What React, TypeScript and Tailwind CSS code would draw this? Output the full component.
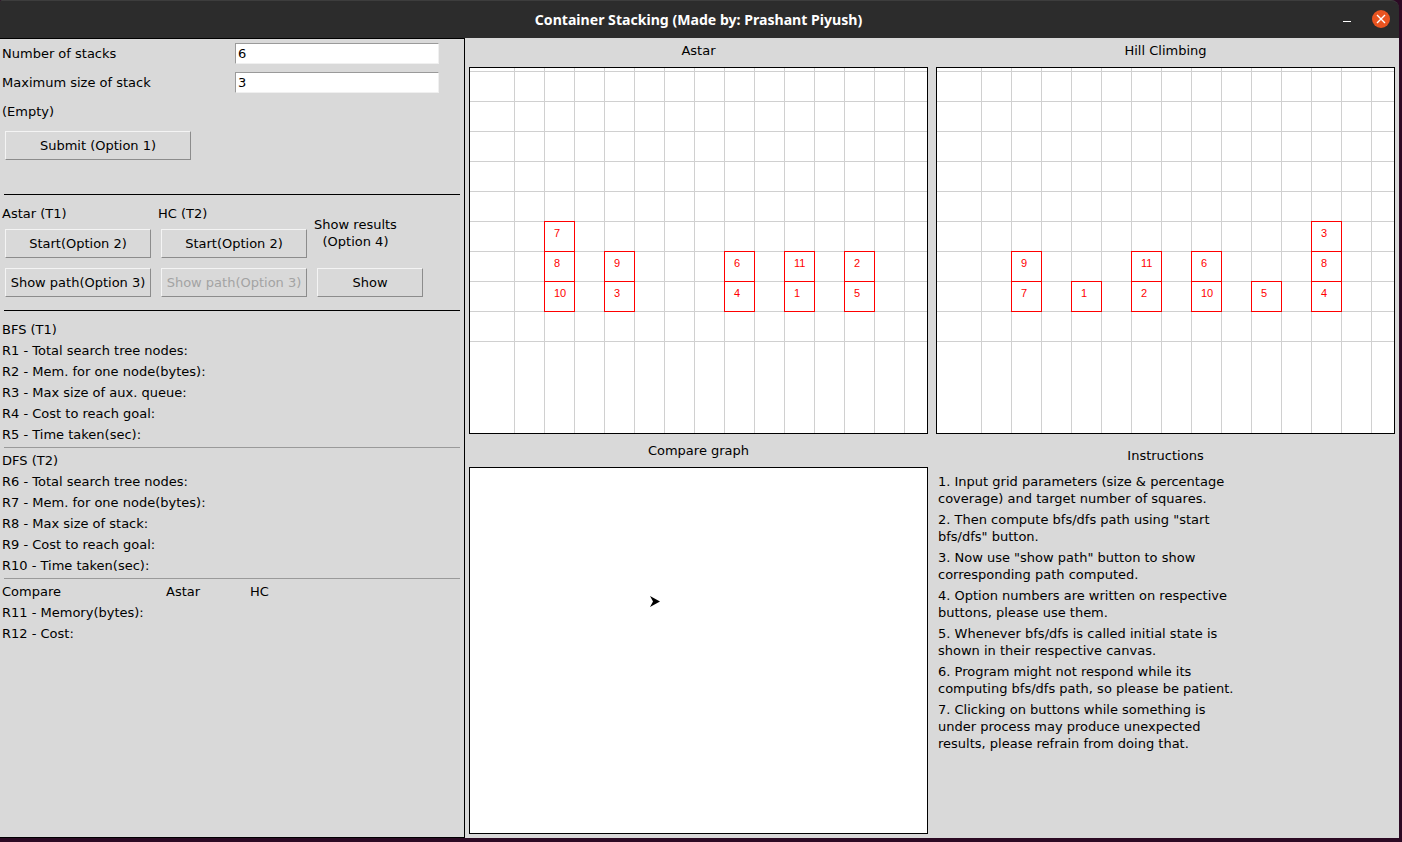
import React from 'react';

const font = { fontFamily: '"DejaVu Sans", sans-serif' };

type Stack = { x: number; items: string[] };

const astarStacks: Stack[] = [
  { x: 74, items: ['7', '8', '10'] },
  { x: 134, items: ['9', '3'] },
  { x: 254, items: ['6', '4'] },
  { x: 314, items: ['11', '1'] },
  { x: 374, items: ['2', '5'] },
];

const hcStacks: Stack[] = [
  { x: 74, items: ['9', '7'] },
  { x: 134, items: ['1'] },
  { x: 194, items: ['11', '2'] },
  { x: 254, items: ['6', '10'] },
  { x: 314, items: ['5'] },
  { x: 374, items: ['3', '8', '4'] },
];

const vLines = Array.from({ length: 15 }, (_, i) => 44 + i * 30).filter((x) => x < 457);
const hLines = Array.from({ length: 10 }, (_, i) => 3 + i * 30);

const GridCanvas: React.FC<{ stacks: Stack[] }> = ({ stacks }) => (
  <div className="h-[367px] w-[459px] border border-black bg-white">
    <svg width="457" height="365" className="block">
      {vLines.map((x) => (
        <line key={x} x1={x + 0.5} x2={x + 0.5} y1="0" y2="365" stroke="#d0d0d0" />
      ))}
      {hLines.map((y) => (
        <line key={y} x1="0" x2="457" y1={y + 0.5} y2={y + 0.5} stroke="#d0d0d0" />
      ))}
      {stacks.map((s) =>
        s.items.map((label, i) => {
          const top = 243 - (s.items.length - i) * 30;
          return (
            <g key={label}>
              <rect x={s.x + 0.5} y={top + 0.5} width="30" height="30" fill="none" stroke="#ff0000" />
              <text x={s.x + 10} y={top + 16} fill="#ff0000" fontSize="11" fontFamily='"Liberation Sans", sans-serif'>
                {label}
              </text>
            </g>
          );
        }),
      )}
    </svg>
  </div>
);

const TkButton: React.FC<{ label: string; className: string; disabled?: boolean }> = ({ label, className, disabled }) => (
  <button
    className={`flex h-[29px] items-center justify-center whitespace-nowrap border border-t-[#f4f4f4] border-l-[#f4f4f4] border-r-[#8c8c8c] border-b-[#8c8c8c] ${
      disabled ? 'text-[#a3a3a3]' : 'text-black'
    } ${className}`}
  >
    {label}
  </button>
);

const FieldRow: React.FC<{ label: string; value: string }> = ({ label, value }) => (
  <div className="flex h-[29px] items-center pl-[2px]">
    <span className="w-[233px]">{label}</span>
    <div className="flex h-[21px] w-[204px] items-center border border-t-[#9a9a9a] border-l-[#9a9a9a] border-r-[#f0f0f0] border-b-[#f0f0f0] bg-white pl-[2px]">
      {value}
    </div>
  </div>
);

const ResultLines: React.FC<{ lines: string[] }> = ({ lines }) => (
  <div className="pl-[2px]">
    {lines.map((line) => (
      <div key={line} className="h-[21px] leading-[21px]">
        {line}
      </div>
    ))}
  </div>
);

const instructions = [
  ['1. Input grid parameters (size & percentage', 'coverage) and target number of squares.'],
  ['2. Then compute bfs/dfs path using "start', 'bfs/dfs" button.'],
  ['3. Now use "show path" button to show', 'corresponding path computed.'],
  ['4. Option numbers are written on respective', 'buttons, please use them.'],
  ['5. Whenever bfs/dfs is called initial state is', 'shown in their respective canvas.'],
  ['6. Program might not respond while its', 'computing bfs/dfs path, so please be patient.'],
  ['7. Clicking on buttons while something is', 'under process may produce unexpected', 'results, please refrain from doing that.'],
];

export default function App() {
  return (
    <div className="h-[842px] w-[1402px] overflow-hidden bg-[#2c0a24] text-[13px] text-black" style={font}>
      <div className="flex h-[838px] w-[1399px] flex-col">
        <div className="relative flex h-[38px] shrink-0 items-center justify-center rounded-tl-[2px] rounded-tr-[8px] border-t border-[#3d3d3d] bg-[#2c2c2c] pr-[2px]">
          <span className="text-[14.1px] font-bold text-white" style={{ fontFamily: '"Noto Sans", sans-serif' }}>
            Container Stacking (Made by: Prashant Piyush)
          </span>
          <div className="absolute top-[20px] left-[1343px] h-px w-[8px] bg-white" />
          <div className="absolute top-[9px] left-[1372px] flex h-[18px] w-[18px] items-center justify-center rounded-full bg-[#e95420]">
            <svg width="10" height="10" viewBox="0 0 10 10">
              <path d="M1 1l8 8M9 1l-8 8" stroke="white" strokeWidth="1.4" />
            </svg>
          </div>
        </div>

        <div className="flex min-h-0 flex-1 bg-[#d9d9d9]">
          <div className="w-[465px] shrink-0 border-t border-r border-b border-black">
            <FieldRow label="Number of stacks" value="6" />
            <FieldRow label="Maximum size of stack" value="3" />
            <div className="flex h-[29px] items-center pl-[2px]">(Empty)</div>
            <TkButton label="Submit (Option 1)" className="mt-[5px] ml-[5px] w-[186px]" />
            <div className="mt-[34px] ml-[4px] h-px w-[456px] bg-black" />

            <div className="flex">
              <div className="w-[156px] pl-[2px]">
                <div className="flex h-[34px] items-center pt-[3px]">Astar (T1)</div>
                <TkButton label="Start(Option 2)" className="ml-[3px] w-[146px]" />
                <TkButton label="Show path(Option 3)" className="mt-[10px] ml-[3px] w-[146px]" />
              </div>
              <div className="w-[156px] pl-[2px]">
                <div className="flex h-[34px] items-center pt-[3px]">HC (T2)</div>
                <TkButton label="Start(Option 2)" className="ml-[3px] w-[146px]" />
                <TkButton label="Show path(Option 3)" className="mt-[10px] ml-[3px] w-[146px]" disabled />
              </div>
              <div className="w-[120px] pl-[2px]">
                <div className="mt-[21px] w-[83px] whitespace-nowrap text-center leading-[17px]">
                  Show results
                  <br />
                  (Option 4)
                </div>
                <TkButton label="Show" className="mt-[18px] ml-[3px] w-[106px]" />
              </div>
            </div>

            <div className="mt-[13px] ml-[4px] h-px w-[456px] bg-black" />

            <div className="pt-[8px]">
              <ResultLines
                lines={[
                  'BFS (T1)',
                  'R1 - Total search tree nodes:',
                  'R2 - Mem. for one node(bytes):',
                  'R3 - Max size of aux. queue:',
                  'R4 - Cost to reach goal:',
                  'R5 - Time taken(sec):',
                ]}
              />
              <div className="mt-[2px] mb-[2px] ml-[4px] h-px w-[456px] bg-[#9a9a9a]" />
              <ResultLines
                lines={[
                  'DFS (T2)',
                  'R6 - Total search tree nodes:',
                  'R7 - Mem. for one node(bytes):',
                  'R8 - Max size of stack:',
                  'R9 - Cost to reach goal:',
                  'R10 - Time taken(sec):',
                ]}
              />
              <div className="mt-[2px] mb-[2px] ml-[4px] h-px w-[456px] bg-[#9a9a9a]" />
              <div className="flex h-[21px] pl-[2px] leading-[21px]">
                <span className="w-[164px]">Compare</span>
                <span className="w-[84px]">Astar</span>
                <span>HC</span>
              </div>
              <ResultLines lines={['R11 - Memory(bytes):', 'R12 - Cost:']} />
            </div>
          </div>

          <div className="grid flex-1 grid-cols-[459px_459px] grid-rows-[auto_auto] content-start gap-x-[8px] pl-[4px]">
            <div className="flex h-[29px] items-center justify-center pb-[4px]">Astar</div>
            <div className="flex h-[29px] items-center justify-center pb-[4px]">Hill Climbing</div>
            <GridCanvas stacks={astarStacks} />
            <GridCanvas stacks={hcStacks} />
            <div className="flex h-[33px] items-center justify-center">Compare graph</div>
            <div className="row-span-2">
              <div className="flex h-[39px] items-center justify-center pt-[5px]">Instructions</div>
              <div className="flex flex-col gap-[4px] pl-[2px] leading-[17px]">
                {instructions.map((para) => (
                  <div key={para[0]}>
                    {para.map((line) => (
                      <div key={line} className="whitespace-pre">
                        {line}
                      </div>
                    ))}
                  </div>
                ))}
              </div>
            </div>
            <div className="relative h-[367px] w-[459px] border border-black bg-white">
              <svg width="10" height="11" viewBox="0 0 10 11" className="absolute top-[128px] left-[180px]">
                <path d="M0 0L10 5.5L0 11L3 5.5Z" fill="black" />
              </svg>
            </div>
          </div>
        </div>
      </div>
    </div>
  );
}
